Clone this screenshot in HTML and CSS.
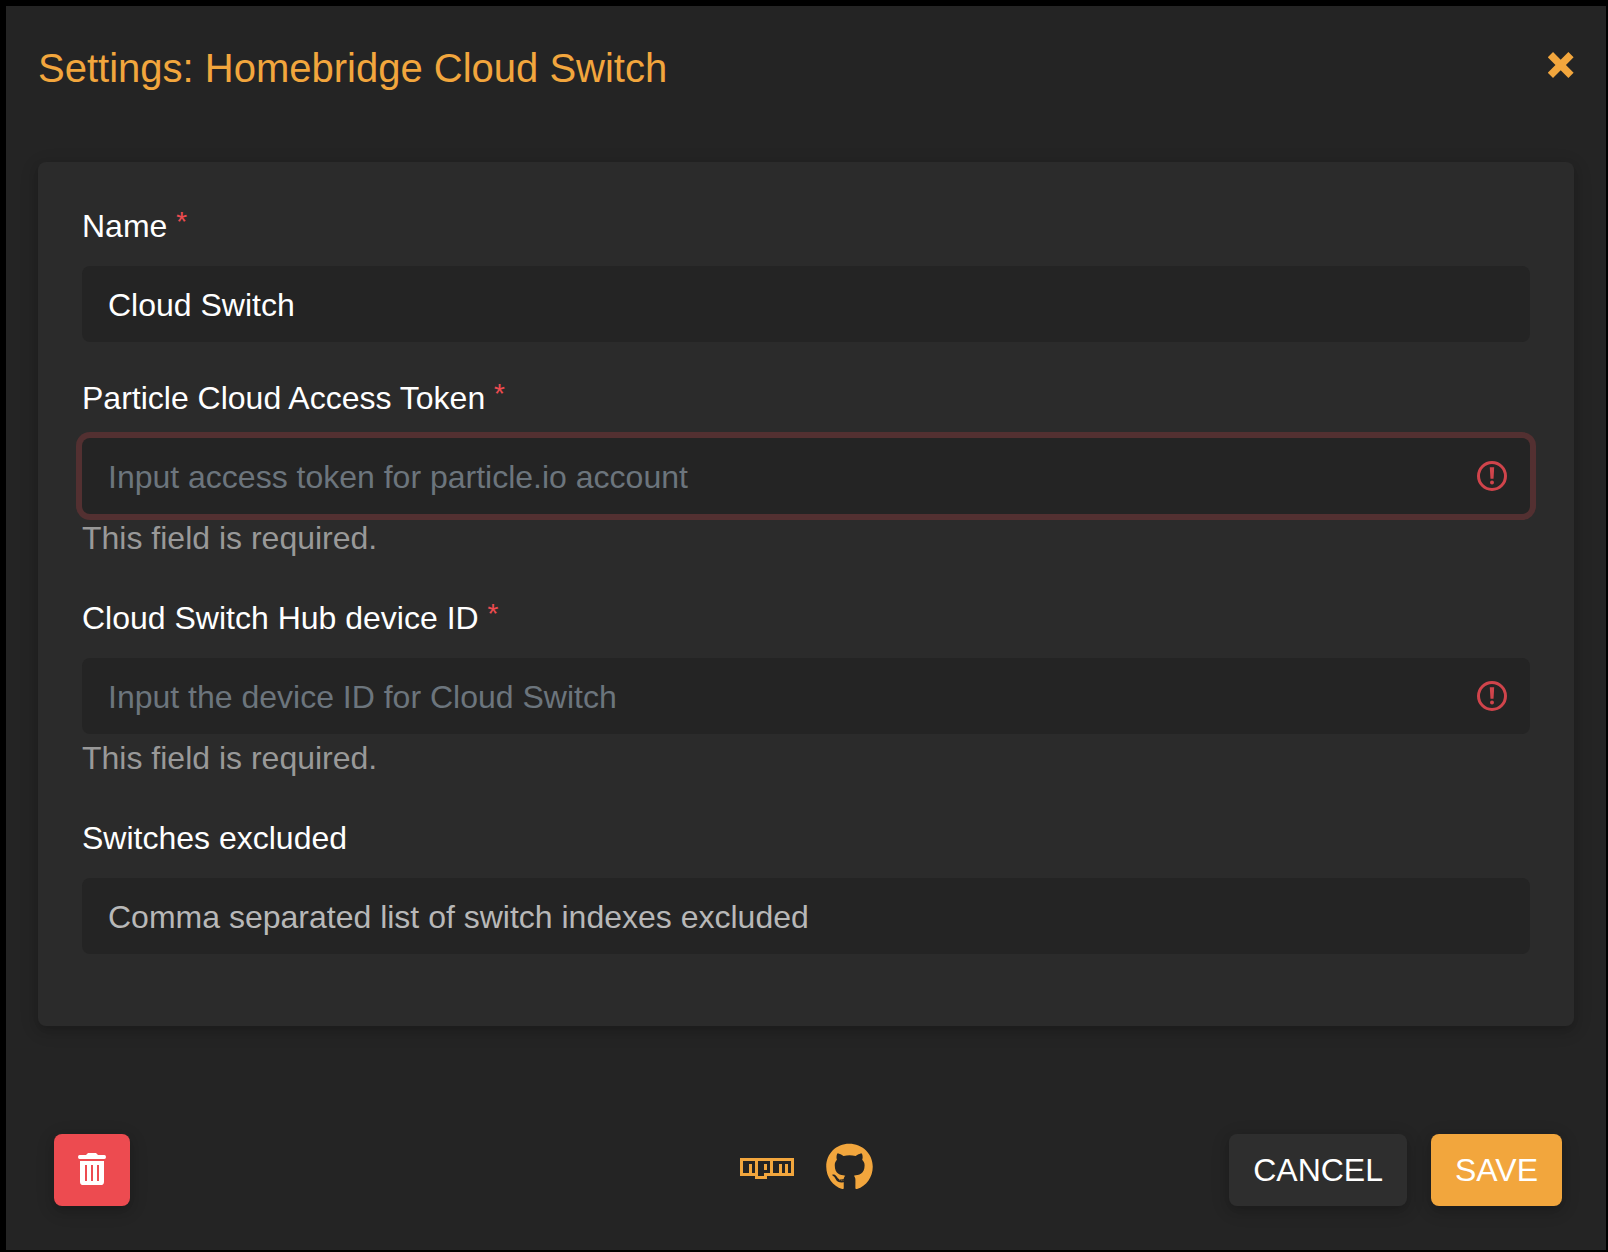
FILE: index.html
```html
<!DOCTYPE html>
<html lang="en">
<head>
<meta charset="utf-8">
<meta name="viewport" content="width=device-width, initial-scale=1">
<title>Settings: Homebridge Cloud Switch</title>
<link rel="stylesheet" href="styles.css">
</head>
<body>
<main class="dialog" role="dialog" aria-labelledby="dialog-title">
  <header class="dialog-header">
    <h1 class="dialog-title" id="dialog-title">Settings: Homebridge Cloud Switch</h1>
    <button class="close" type="button" aria-label="Close">
      <svg class="close-icon" viewBox="0 0 26 26" aria-hidden="true"><path d="M2.4 2.7l20.6 20.6M23 2.7L2.4 23.3"/></svg>
    </button>
  </header>

  <form class="dialog-form">
    <section class="card">
      <div class="field">
        <label class="label" for="name">Name <span class="required">*</span></label>
        <input class="input" id="name" type="text" value="Cloud Switch">
      </div>

      <div class="field">
        <label class="label" for="token">Particle Cloud Access Token <span class="required">*</span></label>
        <div class="control">
          <input class="input input-invalid input-active" id="token" type="text" placeholder="Input access token for particle.io account" aria-describedby="token-help">
          <svg class="alert-icon" viewBox="0 0 30 30" aria-hidden="true"><circle class="alert-ring" cx="15" cy="15" r="13.5"/><path d="M12.8 6.2h4.4l-.7 11.6h-3z"/><circle cx="15" cy="21.4" r="2"/></svg>
        </div>
        <p class="help" id="token-help">This field is required.</p>
      </div>

      <div class="field">
        <label class="label" for="device">Cloud Switch Hub device ID <span class="required">*</span></label>
        <div class="control">
          <input class="input input-invalid" id="device" type="text" placeholder="Input the device ID for Cloud Switch" aria-describedby="device-help">
          <svg class="alert-icon" viewBox="0 0 30 30" aria-hidden="true"><circle class="alert-ring" cx="15" cy="15" r="13.5"/><path d="M12.8 6.2h4.4l-.7 11.6h-3z"/><circle cx="15" cy="21.4" r="2"/></svg>
        </div>
        <p class="help" id="device-help">This field is required.</p>
      </div>

      <div class="field">
        <label class="label" for="excluded">Switches excluded</label>
        <input class="input" id="excluded" type="text" placeholder="Comma separated list of switch indexes excluded">
      </div>
    </section>

    <footer class="dialog-footer">
      <button class="btn btn-delete" type="button" aria-label="Remove">
        <svg class="trash-icon" viewBox="0 0 84 96" aria-hidden="true"><path fill-rule="evenodd" d="M24 6L30 0H54L60 6H79Q84 6 84 12T79 18H5Q0 18 0 12T5 6ZM6 24H78V86Q78 96 68 96H16Q6 96 6 86ZM21 36V84H27V36ZM39 36V84H45V36ZM57 36V84H63V36Z"/></svg>
      </button>
      <nav class="links">
        <a class="link" href="#npm" aria-label="npm">
          <svg class="npm-icon" viewBox="0 0 576 512" aria-hidden="true"><path d="M288 288h-32v-64h32v64zm288-128v192H288v32H160v-32H0V160h576zm-416 32H32v128h64v-96h32v96h32V192zm160 0H192v160h64v-32h64V192zm224 0H352v128h64v-96h32v96h32v-96h32v96h32V192z"/></svg>
        </a>
        <a class="link" href="#github" aria-label="GitHub">
          <svg class="github-icon" viewBox="0 0 496 512" aria-hidden="true"><path d="M165.9 397.4c0 2-2.3 3.6-5.2 3.6-3.3.3-5.6-1.3-5.6-3.6 0-2 2.3-3.6 5.2-3.6 3-.3 5.6 1.3 5.6 3.6zm-31.1-4.5c-.7 2 1.3 4.3 4.3 4.9 2.6 1 5.6 0 6.2-2s-1.3-4.3-4.3-5.2c-2.6-.7-5.5.3-6.2 2.3zm44.2-1.7c-2.9.7-4.9 2.6-4.6 4.9.3 2 2.9 3.3 5.9 2.6 2.9-.7 4.9-2.6 4.6-4.6-.3-1.9-3-3.2-5.9-2.9zM244.8 8C106.1 8 0 113.3 0 252c0 110.9 69.8 205.8 169.5 239.2 12.8 2.3 17.3-5.6 17.3-12.1 0-6.2-.3-40.4-.3-61.4 0 0-70 15-84.7-29.8 0 0-11.4-29.1-27.8-36.6 0 0-22.9-15.7 1.6-15.4 0 0 24.9 2 38.6 25.8 21.9 38.6 58.6 27.5 72.9 20.9 2.3-16 8.8-27.1 16-33.7-55.9-6.2-112.3-14.3-112.3-110.5 0-27.5 7.6-41.3 23.6-58.9-2.6-6.5-11.1-33.3 2.6-67.9 20.9-6.5 69 27 69 27 20-5.6 41.5-8.5 62.8-8.5s42.8 2.9 62.8 8.5c0 0 48.1-33.6 69-27 13.7 34.7 5.2 61.4 2.6 67.9 16 17.7 25.8 31.5 25.8 58.9 0 96.5-58.9 104.2-114.8 110.5 9.2 7.9 17 22.9 17 46.4 0 33.7-.3 75.4-.3 83.6 0 6.5 4.6 14.4 17.3 12.1C428.2 457.8 496 362.9 496 252 496 113.3 383.5 8 244.8 8z"/></svg>
        </a>
      </nav>
      <div class="actions">
        <button class="btn" type="button">CANCEL</button>
        <button class="btn btn-save" type="submit">SAVE</button>
      </div>
    </footer>
  </form>
</main>
</body>
</html>
```
FILE: styles.css
```css
:root {
  --accent: #f2a63d;
  --danger: #ed4b50;
  --surface: #242424;
  --card: #2b2b2b;
}

* {
  box-sizing: border-box;
}

body {
  margin: 0;
  padding: 6px 2px 2px 6px;
  background: #000;
  color: #fff;
  font-family: "Liberation Sans", Arial, sans-serif;
  font-size: 32px;
  line-height: 48px;
}

.dialog {
  background: var(--surface);
}

.dialog-header {
  display: flex;
  justify-content: space-between;
  align-items: center;
  padding: 32px;
}

.dialog-title {
  margin: 0;
  color: var(--accent);
  font-size: 40px;
  font-weight: 400;
  line-height: 60px;
}

.close {
  display: flex;
  padding: 0 0 6px;
  border: 0;
  background: none;
}

.close-icon {
  width: 26px;
  height: 26px;
  fill: none;
  stroke: var(--accent);
  stroke-width: 7.4;
}

.card {
  display: flex;
  flex-direction: column;
  gap: 32px;
  margin: 32px 32px 64px;
  padding: 40px 44px 72px;
  border-radius: 8px;
  background: var(--card);
  box-shadow: 0 4px 10px rgba(0, 0, 0, 0.16), 0 4px 20px rgba(0, 0, 0, 0.12);
}

.label {
  display: block;
  margin-bottom: 16px;
}

.required {
  color: var(--danger);
  font-size: 28px;
  line-height: 28px;
  vertical-align: 6px;
}

.control {
  position: relative;
}

.input {
  display: block;
  width: 100%;
  height: 76px;
  padding: 2px 26px 0;
  border: 0;
  border-radius: 8px;
  outline: 0;
  background: var(--surface);
  color: #fff;
  font: inherit;
}

.input::placeholder {
  color: #b8b8b8;
  opacity: 1;
}

.input-invalid {
  padding-right: 76px;
}

.input-invalid::placeholder {
  color: #6c757d;
}

.input-active {
  box-shadow: 0 0 0 6px #533031;
}

.alert-icon {
  position: absolute;
  top: 23px;
  right: 23px;
  width: 30px;
  height: 30px;
  fill: #d0444b;
}

.alert-ring {
  fill: none;
  stroke: #d0444b;
  stroke-width: 3;
}

.help {
  margin: 0;
  color: #999;
}

.dialog-footer {
  display: grid;
  grid-template-columns: 1fr auto 1fr;
  align-items: center;
  padding: 44px;
}

.btn {
  height: 72px;
  padding: 0 24px;
  border: 0;
  border-radius: 8px;
  background: #2e2e2e;
  color: #fff;
  font: inherit;
  box-shadow: 0 4px 10px rgba(0, 0, 0, 0.16), 0 4px 20px rgba(0, 0, 0, 0.12);
}

.btn-delete {
  display: flex;
  align-items: center;
  margin-left: 4px;
  padding-bottom: 2px;
  justify-self: start;
  background: var(--danger);
}

.trash-icon {
  width: 28px;
  height: 32px;
  fill: #fff;
}

.btn-save {
  background: var(--accent);
}

.links {
  display: flex;
  gap: 32px;
  padding-bottom: 6px;
}

.link {
  display: flex;
  color: var(--accent);
}

.npm-icon,
.github-icon {
  height: 48px;
  fill: currentColor;
}

.npm-icon {
  width: 54px;
}

.github-icon {
  width: 47px;
}

.actions {
  display: flex;
  justify-content: flex-end;
  gap: 24px;
}
```
